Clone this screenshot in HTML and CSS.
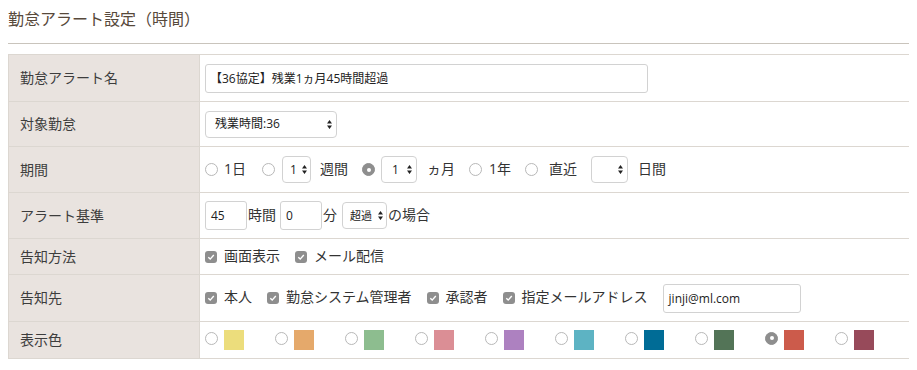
FILE: index.html
```
<!DOCTYPE html>
<html lang="ja">
<head>
<meta charset="utf-8">
<title>勤怠アラート設定（時間）</title>
<link rel="stylesheet" href="styles.css">
</head>
<body>
<h1 class="title">勤怠アラート設定（時間）</h1>
<div class="rule"></div>
<table class="form">
  <tr class="h47">
    <th><span class="lbl">勤怠アラート名</span></th>
    <td><div class="line"><div class="field w-name">【36協定】残業1ヵ月45時間超過</div></div></td>
  </tr>
  <tr class="h45">
    <th><span class="lbl">対象勤怠</span></th>
    <td><div class="line"><div class="select w-kind"><span>残業時間:36</span><svg class="arr" width="5" height="9" viewBox="0 0 5 9"><path d="M2.5 0L5 3.4H0Z M2.5 9L5 5.6H0Z" fill="#222"/></svg></div></div></td>
  </tr>
  <tr class="h46">
    <th><span class="lbl">期間</span></th>
    <td><div class="line">
      <span class="radio"></span><span class="txt ml6">1日</span>
      <span class="radio ml16"></span>
      <div class="select w-s1 ml7"><span>1</span><svg class="arr" width="5" height="9" viewBox="0 0 5 9"><path d="M2.5 0L5 3.4H0Z M2.5 9L5 5.6H0Z" fill="#222"/></svg></div>
      <span class="txt ml9">週間</span>
      <span class="radio on ml14"></span>
      <div class="select w-s2 ml6"><span>1</span><svg class="arr" width="5" height="9" viewBox="0 0 5 9"><path d="M2.5 0L5 3.4H0Z M2.5 9L5 5.6H0Z" fill="#222"/></svg></div>
      <span class="txt ml10">ヵ月</span>
      <span class="radio ml14"></span><span class="txt ml7">1年</span>
      <span class="radio ml14"></span><span class="txt ml11">直近</span>
      <div class="select w-s3 ml14"><span></span><svg class="arr" width="5" height="9" viewBox="0 0 5 9"><path d="M2.5 0L5 3.4H0Z M2.5 9L5 5.6H0Z" fill="#222"/></svg></div>
      <span class="txt ml10">日間</span>
    </div></td>
  </tr>
  <tr class="h46">
    <th><span class="lbl">アラート基準</span></th>
    <td><div class="line">
      <div class="field w-num">45</div><span class="txt ml1">時間</span>
      <div class="field w-num ml4">0</div><span class="txt ml1">分</span>
      <div class="select w-cmp ml5 small"><span>超過</span><svg class="arr" width="5" height="9" viewBox="0 0 5 9"><path d="M2.5 0L5 3.4H0Z M2.5 9L5 5.6H0Z" fill="#222"/></svg></div><span class="txt ml1">の場合</span>
    </div></td>
  </tr>
  <tr class="h36">
    <th><span class="lbl">告知方法</span></th>
    <td><div class="line">
      <span class="check"><svg width="12" height="12" viewBox="0 0 12 12"><path d="M3.3 6.2L5.2 8.1L8.8 4" stroke="#fff" stroke-width="1.4" fill="none"/></svg></span><span class="txt ml7">画面表示</span>
      <span class="check ml15"><svg width="12" height="12" viewBox="0 0 12 12"><path d="M3.3 6.2L5.2 8.1L8.8 4" stroke="#fff" stroke-width="1.4" fill="none"/></svg></span><span class="txt ml7">メール配信</span>
    </div></td>
  </tr>
  <tr class="h47">
    <th><span class="lbl">告知先</span></th>
    <td><div class="line">
      <span class="check"><svg width="12" height="12" viewBox="0 0 12 12"><path d="M3.3 6.2L5.2 8.1L8.8 4" stroke="#fff" stroke-width="1.4" fill="none"/></svg></span><span class="txt ml7">本人</span>
      <span class="check ml15"><svg width="12" height="12" viewBox="0 0 12 12"><path d="M3.3 6.2L5.2 8.1L8.8 4" stroke="#fff" stroke-width="1.4" fill="none"/></svg></span><span class="txt ml7">勤怠システム管理者</span>
      <span class="check ml15"><svg width="12" height="12" viewBox="0 0 12 12"><path d="M3.3 6.2L5.2 8.1L8.8 4" stroke="#fff" stroke-width="1.4" fill="none"/></svg></span><span class="txt ml7">承認者</span>
      <span class="check ml15"><svg width="12" height="12" viewBox="0 0 12 12"><path d="M3.3 6.2L5.2 8.1L8.8 4" stroke="#fff" stroke-width="1.4" fill="none"/></svg></span><span class="txt ml7">指定メールアドレス</span>
      <div class="field w-mail ml15">jinji@ml.com</div>
    </div></td>
  </tr>
  <tr class="h37">
    <th><span class="lbl">表示色</span></th>
    <td><div class="line colors">
      <span class="color"><span class="radio"></span><span class="swatch" style="background:#ecdd7c"></span></span>
      <span class="color"><span class="radio"></span><span class="swatch" style="background:#e5a96b"></span></span>
      <span class="color"><span class="radio"></span><span class="swatch" style="background:#8dbd8f"></span></span>
      <span class="color"><span class="radio"></span><span class="swatch" style="background:#db8e95"></span></span>
      <span class="color"><span class="radio"></span><span class="swatch" style="background:#ad81c0"></span></span>
      <span class="color"><span class="radio"></span><span class="swatch" style="background:#5db3c3"></span></span>
      <span class="color"><span class="radio"></span><span class="swatch" style="background:#006c96"></span></span>
      <span class="color"><span class="radio"></span><span class="swatch" style="background:#537457"></span></span>
      <span class="color"><span class="radio on"></span><span class="swatch" style="background:#cc5b4b"></span></span>
      <span class="color"><span class="radio"></span><span class="swatch" style="background:#974a5a"></span></span>
    </div></td>
  </tr>
</table>
</body>
</html>
```
FILE: styles.css
```
html, body {
  background: #fff;
}
body {
  margin: 8px;
  font-family: "Open Sans", "Noto Sans CJK JP", sans-serif;
  color: #333;
}
.title {
  margin: 0;
  font-size: 16px;
  line-height: 20px;
  height: 20px;
  font-weight: normal;
  color: #57493b;
  font-family: "Noto Sans CJK JP", sans-serif;
}
.rule {
  margin-top: 15px;
  width: 904px;
  border-top: 1px solid #c9c4bc;
}
.form {
  margin-top: 10px;
  width: 904px;
  border-collapse: collapse;
  font-size: 14px;
}
.form th, .form td {
  border: 1px solid #dcd7d1;
  padding: 0;
  vertical-align: middle;
}
.form th {
  width: 179px;
  background: #e9e3df;
  text-align: left;
  font-weight: normal;
  padding-left: 11px;
  color: #3d3d3d;
  font-family: "Noto Sans CJK JP", sans-serif;
}
.lbl {
  display: inline-block;
  line-height: 20px;
  padding-bottom: 2px;
}
.form td {
  padding-left: 5px;
}
.h47 th, .h47 td { height: 46px; }
.h45 th, .h45 td { height: 44px; }
.h46 th, .h46 td { height: 45px; }
.h36 th, .h36 td { height: 35px; }
.h37 th, .h37 td { height: 36px; }
.line {
  display: flex;
  align-items: center;
  line-height: 20px;
}
.txt {
  white-space: nowrap;
  color: #333;
  padding-bottom: 2px;
}
.field {
  box-sizing: border-box;
  height: 29px;
  border: 1px solid #d2d2d2;
  border-radius: 3px;
  background: #fff;
  font-size: 12px;
  line-height: 27px;
  padding-left: 7px;
  color: #222;
  white-space: nowrap;
}
.w-name { width: 443px; padding-left: 4px; }
.w-num { width: 42px; padding-left: 5px; }
.w-mail { width: 138px; padding-left: 5px; }
.select {
  box-sizing: border-box;
  height: 27px;
  border: 1px solid #d2d2d2;
  border-radius: 4px;
  background: #fff;
  display: flex;
  align-items: center;
  font-size: 12px;
  padding: 0 4px 0 9px;
  color: #222;
  white-space: nowrap;
}
.select .arr { margin-left: auto; flex: none; }
.select.small { font-size: 11px; padding-left: 7px; }
.w-kind { width: 132px; }
.w-s1 { width: 29px; padding-left: 7px; padding-right: 3px; }
.w-s2 { width: 36px; padding-left: 10px; }
.w-s3 { width: 37px; }
.w-cmp { width: 45px; padding-right: 3px; }
.radio {
  box-sizing: border-box;
  width: 13px;
  height: 13px;
  border-radius: 50%;
  border: 1px solid #b8b8b8;
  background: #fff;
  flex: none;
  position: relative;
}
.radio.on {
  border-color: #8e8e8e;
  background: #8e8e8e;
}
.radio.on::after {
  content: "";
  position: absolute;
  left: 3.5px;
  top: 3.5px;
  width: 4px;
  height: 4px;
  border-radius: 50%;
  background: #fff;
}
.check {
  width: 12px;
  height: 12px;
  border-radius: 3px;
  background: #8e8e8e;
  flex: none;
  display: flex;
}
.colors .color {
  display: flex;
  align-items: center;
  width: 70px;
  flex: none;
}
.colors .radio {
  margin-bottom: 4px;
}
.swatch {
  width: 20px;
  height: 20px;
  margin-left: 6px;
  flex: none;
}
.ml1 { margin-left: 1px; }
.ml4 { margin-left: 4px; }
.ml5 { margin-left: 5px; }
.ml6 { margin-left: 6px; }
.ml7 { margin-left: 7px; }
.ml9 { margin-left: 9px; }
.ml10 { margin-left: 10px; }
.ml11 { margin-left: 11px; }
.ml14 { margin-left: 14px; }
.ml15 { margin-left: 15px; }
.ml16 { margin-left: 16px; }
```
